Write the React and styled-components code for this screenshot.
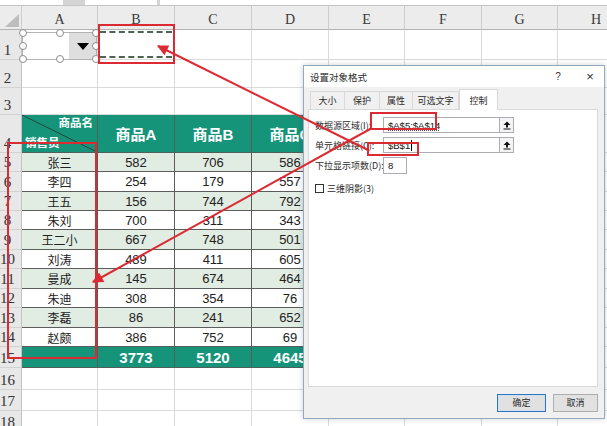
import React from "react"
import styled, { createGlobalStyle } from "styled-components"

const GlobalStyle = createGlobalStyle`
  html, body {
    margin: 0;
    padding: 0;
    background: #ffffff;
  }
  body {
    font-family: "Liberation Sans", "Noto Sans CJK SC", sans-serif;
  }
`

const TEAL = "#16947a"
const RED = "#dc2a33"

const COLS = "22px 76px 77px 77px 77px 76px 77px 76px 77px"
const ROW_HEIGHTS = [30, 28, 27, 38, 19, 20, 19, 19, 20, 19, 20, 19, 20, 19, 21, 22, 21, 21]
const LETTERS = ["A", "B", "C", "D", "E", "F", "G", "H"]

const people = [
  ["张三", 582, 706, 586],
  ["李四", 254, 179, 557],
  ["王五", 156, 744, 792],
  ["朱刘", 700, 311, 343],
  ["王二小", 667, 748, 501],
  ["刘涛", 489, 411, 605],
  ["曼成", 145, 674, 464],
  ["朱迪", 308, 354, 76],
  ["李磊", 86, 241, 652],
  ["赵颇", 386, 752, 69],
]

const Page = styled.div`
  position: relative;
  width: 607px;
  height: 426px;
  overflow: hidden;
  background: #fff;
`

const FormulaStrip = styled.div`
  display: flex;
  height: 5px;
  background: #d4d4d4;
  border-bottom: 1px solid #c4c4c4;
`

const StripBox = styled.div`
  width: ${(p) => (p.$w ? `${p.$w}px` : "auto")};
  flex: ${(p) => (p.$w ? "none" : 1)};
  margin-right: ${(p) => p.$gap || 0}px;
  background: #fff;
`

const Sheet = styled.div`
  display: grid;
  grid-template-columns: ${COLS};
  grid-template-rows: 24px ${ROW_HEIGHTS.map((h) => `${h}px`).join(" ")};
`

const Corner = styled.div`
  display: flex;
  align-items: flex-end;
  justify-content: flex-end;
  padding: 0 2px 2px 0;
  box-sizing: border-box;
  background: #ececec;
  border-right: 1px solid #cdcdcd;
  border-bottom: 1px solid #b2b2b2;
`

const SelectAll = styled.div`
  width: 0;
  height: 0;
  border-left: 14px solid transparent;
  border-bottom: 13px solid #bdbdbd;
`

const ColHead = styled.div`
  display: flex;
  align-items: flex-end;
  justify-content: center;
  padding-bottom: 1px;
  box-sizing: border-box;
  background: #ececec;
  border-right: 1px solid #cdcdcd;
  border-bottom: 1px solid #b2b2b2;
  font-family: "Liberation Serif", serif;
  font-size: 14px;
  color: #3a3a3a;
`

const RowHead = styled.div`
  display: flex;
  align-items: flex-end;
  justify-content: center;
  padding: 0 6px 0 0;
  box-sizing: border-box;
  background: #e8e8e8;
  border-right: 1px solid #c2c2c2;
  border-bottom: 1px solid #d2d2d2;
  font-family: "Liberation Serif", serif;
  font-size: 15px;
  line-height: 17px;
  color: #333;
`

const tones = {
  blank: { bg: "#fff", line: "#dadada", color: "#222" },
  head: { bg: TEAL, line: "#4f5f59", color: "#fff" },
  total: { bg: TEAL, line: "#4f5f59", color: "#fff" },
  band: { bg: "#e1ece2", line: "#5c5c5c", color: "#222" },
  plain: { bg: "#fff", line: "#5c5c5c", color: "#222" },
}

const Cell = styled.div`
  position: relative;
  display: flex;
  align-items: center;
  justify-content: center;
  box-sizing: border-box;
  overflow: hidden;
  white-space: nowrap;
  background: ${(p) => tones[p.$tone].bg};
  color: ${(p) => tones[p.$tone].color};
  border-right: 1px solid ${(p) => tones[p.$tone].line};
  border-bottom: 1px solid ${(p) => tones[p.$tone].line};
  font-family: "Liberation Sans", "Noto Sans CJK SC", sans-serif;
  font-size: ${(p) => (p.$tone === "head" || p.$tone === "total" ? "15px" : p.$name ? "12px" : "13px")};
  font-weight: ${(p) => (p.$tone === "head" || p.$tone === "total" ? 700 : 400)};
`

const DiagCell = styled(Cell)`
  flex-direction: column;
  align-items: stretch;
  justify-content: space-between;
  padding: 1px 4px 2px 3px;
  font-size: 11.5px;
  background: linear-gradient(
    to top right,
    ${TEAL} calc(50% - 0.8px),
    #2a3b35 50%,
    ${TEAL} calc(50% + 0.8px)
  );
`

const DiagText = styled.span`
  align-self: ${(p) => (p.$end ? "flex-end" : "flex-start")};
  line-height: 14px;
`

const Marquee = styled.div`
  position: absolute;
  left: 2px;
  right: 2px;
  top: 1px;
  bottom: 1px;
  border-top: 2px dashed #4d6356;
  border-bottom: 2px dashed #4d6356;
`

const ComboBox = styled.div`
  position: absolute;
  left: 22px;
  top: 32px;
  width: 75px;
  height: 28px;
  box-sizing: border-box;
  display: flex;
  border: 1px solid #b3b3b3;
  background: #fff;
`

const ComboField = styled.div`
  flex: 1;
`

const ComboButton = styled.div`
  width: 27px;
  display: flex;
  align-items: center;
  justify-content: center;
  background: #dedede;

  &::after {
    content: "";
    border-left: 6px solid transparent;
    border-right: 6px solid transparent;
    border-top: 7px solid #000;
  }
`

const Handle = styled.span`
  position: absolute;
  left: ${(p) => p.$x}%;
  top: ${(p) => p.$y}%;
  width: 6px;
  height: 6px;
  margin: -4px 0 0 -4px;
  border-radius: 50%;
  border: 1px solid #8c8c8c;
  background: #fff;
`

const Dialog = styled.div`
  position: absolute;
  left: 303px;
  top: 65px;
  width: 302px;
  height: 354px;
  box-sizing: border-box;
  display: flex;
  flex-direction: column;
  background: #f0f0f0;
  border: 1px solid #93a9c0;
  box-shadow: 0 0 6px rgba(0, 0, 0, 0.18);
  font-family: "Noto Sans CJK SC", "Liberation Sans", sans-serif;
  font-size: 9px;
  color: #2b2b2b;
`

const TitleBar = styled.div`
  height: 21px;
  display: flex;
  align-items: center;
  padding: 0 6px 0 6px;
  background: #fff;
  font-size: 9.5px;
`

const Title = styled.span`
  flex: 1;
`

const TitleButton = styled.span`
  width: 16px;
  text-align: center;
  margin-left: ${(p) => p.$gap || 0}px;
  font-family: "Liberation Sans", sans-serif;
  font-size: ${(p) => (p.$big ? "13px" : "10px")};
  color: #333;
`

const TabStrip = styled.div`
  height: 22px;
  display: flex;
  align-items: flex-end;
  padding-left: 6px;
`

const Tab = styled.div`
  width: ${(p) => p.$w}px;
  height: ${(p) => (p.$active ? 21 : 18)}px;
  box-sizing: border-box;
  display: flex;
  align-items: center;
  justify-content: center;
  background: ${(p) => (p.$active ? "#fff" : "#f0f0f0")};
  border: 1px solid #d9d9d9;
  border-bottom: none;
  border-left-width: ${(p) => (p.$first || p.$active ? 1 : 0)}px;
  margin-bottom: ${(p) => (p.$active ? -1 : 0)}px;
  position: relative;
  z-index: ${(p) => (p.$active ? 1 : 0)};
`

const Panel = styled.div`
  flex: 1;
  margin: 0 6px 0 4px;
  padding: 7px 6px;
  display: flex;
  flex-direction: column;
  gap: 4px;
  background: #fff;
  border: 1px solid #d9d9d9;
`

const FieldRow = styled.div`
  display: flex;
  align-items: center;
`

const Label = styled.span`
  width: 68px;
  white-space: nowrap;
`

const Input = styled.div`
  width: ${(p) => p.$w}px;
  height: ${(p) => p.$h || 16}px;
  box-sizing: border-box;
  display: flex;
  align-items: center;
  padding-left: 4px;
  border: 1px solid #abadb3;
  background: #fff;
  font-family: "Liberation Sans", sans-serif;
  font-size: 9.5px;
  color: #111;
`

const Dotted = styled.span`
  text-decoration: underline dotted #555;
`

const Caret = styled.span`
  width: 1px;
  height: 11px;
  margin-left: 1px;
  background: #000;
`

const RefButton = styled.div`
  width: 14px;
  height: 16px;
  box-sizing: border-box;
  display: flex;
  align-items: center;
  justify-content: center;
  border: 1px solid #abadb3;
  border-left: none;
  background: #f4f4f4;
`

const CheckRow = styled.label`
  display: flex;
  align-items: center;
  gap: 3px;
  margin-top: 4px;
`

const CheckBox = styled.span`
  width: 9px;
  height: 9px;
  box-sizing: border-box;
  border: 1px solid #333;
  background: #fff;
`

const Footer = styled.div`
  height: 31px;
  display: flex;
  align-items: center;
  justify-content: flex-end;
  gap: 7px;
  padding-right: 6px;
`

const Button = styled.div`
  width: ${(p) => p.$w}px;
  height: 18px;
  box-sizing: border-box;
  display: flex;
  align-items: center;
  justify-content: center;
  background: #e1e1e1;
  border: 1px solid ${(p) => (p.$primary ? "#2f75c0" : "#adadad")};
  box-shadow: ${(p) => (p.$primary ? "inset 0 0 0 1px #cfe0f2" : "none")};
`

const Marks = styled.svg`
  position: absolute;
  left: 0;
  top: 0;
  pointer-events: none;
`

const UpIcon = () => (
  <svg width="8" height="9" viewBox="0 0 8 9">
    <path d="M4 0.5 L7.5 4 L5 4 L5 6.5 L3 6.5 L3 4 L0.5 4 Z" fill="#111" />
    <rect x="0.5" y="7.5" width="7" height="1" fill="#111" />
  </svg>
)

function rowCells(n) {
  const blanks = (count) => Array.from({ length: count }, () => ({ tone: "blank" }))
  if (n === 1) {
    return [{ tone: "blank" }, { tone: "blank", marquee: true }, ...blanks(6)]
  }
  if (n === 4) {
    return [
      { tone: "head", diag: true },
      { tone: "head", text: "商品A" },
      { tone: "head", text: "商品B" },
      { tone: "head", text: "商品C" },
      ...blanks(4),
    ]
  }
  if (n >= 5 && n <= 14) {
    const [name, a, b, c] = people[n - 5]
    const tone = n % 2 ? "band" : "plain"
    return [
      { tone, text: name, name: true },
      { tone, text: a },
      { tone, text: b },
      { tone, text: c },
      ...blanks(4),
    ]
  }
  if (n === 15) {
    return [
      { tone: "total", text: "" },
      { tone: "total", text: 3773 },
      { tone: "total", text: 5120 },
      { tone: "total", text: 4645 },
      ...blanks(4),
    ]
  }
  return blanks(8)
}

const handles = [
  [0, 0], [50, 0], [100, 0],
  [0, 50], [100, 50],
  [0, 100], [50, 100], [100, 100],
]

const tabs = [
  { label: "大小", w: 35 },
  { label: "保护", w: 35 },
  { label: "属性", w: 33 },
  { label: "可选文字", w: 46 },
  { label: "控制", w: 39, active: true },
]

const App = () => {
  return (
    <Page>
      <GlobalStyle />
      <FormulaStrip>
        <StripBox $w={63} $gap={22} />
        <StripBox $w={72} $gap={3} />
        <StripBox />
      </FormulaStrip>

      <Sheet>
        <Corner>
          <SelectAll />
        </Corner>
        {LETTERS.map((l) => (
          <ColHead key={l}>{l}</ColHead>
        ))}
        {ROW_HEIGHTS.map((_, i) => {
          const n = i + 1
          return (
            <React.Fragment key={n}>
              <RowHead>{n}</RowHead>
              {rowCells(n).map((c, j) =>
                c.diag ? (
                  <DiagCell key={j} $tone="head">
                    <DiagText $end>商品名</DiagText>
                    <DiagText>销售员</DiagText>
                  </DiagCell>
                ) : (
                  <Cell key={j} $tone={c.tone} $name={c.name}>
                    {c.text}
                    {c.marquee && <Marquee />}
                  </Cell>
                )
              )}
            </React.Fragment>
          )
        })}
      </Sheet>

      <ComboBox>
        <ComboField />
        <ComboButton />
        {handles.map(([x, y]) => (
          <Handle key={`${x}-${y}`} $x={x} $y={y} />
        ))}
      </ComboBox>

      <Dialog>
        <TitleBar>
          <Title>设置对象格式</Title>
          <TitleButton>?</TitleButton>
          <TitleButton $big $gap={16}>×</TitleButton>
        </TitleBar>
        <TabStrip>
          {tabs.map((t, i) => (
            <Tab key={t.label} $w={t.w} $active={t.active} $first={i === 0}>
              {t.label}
            </Tab>
          ))}
        </TabStrip>
        <Panel>
          <FieldRow>
            <Label>数据源区域(I):</Label>
            <Input $w={117}>
              <Dotted>$A$5:$A$14</Dotted>
            </Input>
            <RefButton>
              <UpIcon />
            </RefButton>
          </FieldRow>
          <FieldRow>
            <Label>单元格链接(C):</Label>
            <Input $w={117}>
              $B$1
              <Caret />
            </Input>
            <RefButton>
              <UpIcon />
            </RefButton>
          </FieldRow>
          <FieldRow>
            <Label>下拉显示项数(D):</Label>
            <Input $w={24} $h={17}>8</Input>
          </FieldRow>
          <CheckRow>
            <CheckBox />
            三维阴影(3)
          </CheckRow>
        </Panel>
        <Footer>
          <Button $w={49} $primary>确定</Button>
          <Button $w={45}>取消</Button>
        </Footer>
      </Dialog>

      <Marks width="607" height="426" viewBox="0 0 607 426">
        <defs>
          <marker
            id="arrowHead"
            viewBox="0 0 10 10"
            refX="9"
            refY="5"
            markerWidth="13"
            markerHeight="11"
            markerUnits="userSpaceOnUse"
            orient="auto"
          >
            <path d="M0,0 L10,5 L0,10 Z" fill={RED} />
          </marker>
        </defs>
        <g fill="none" stroke={RED} strokeWidth="2">
          <rect x="99" y="25" width="75" height="38" />
          <rect x="8" y="143" width="88" height="215" />
          <rect x="371" y="113" width="65" height="16" />
          <rect x="368" y="143" width="50" height="12" />
          <line x1="368" y1="150" x2="158" y2="46" markerEnd="url(#arrowHead)" />
          <line x1="372" y1="128" x2="93" y2="282" markerEnd="url(#arrowHead)" />
        </g>
      </Marks>
    </Page>
  )
}

export default App
